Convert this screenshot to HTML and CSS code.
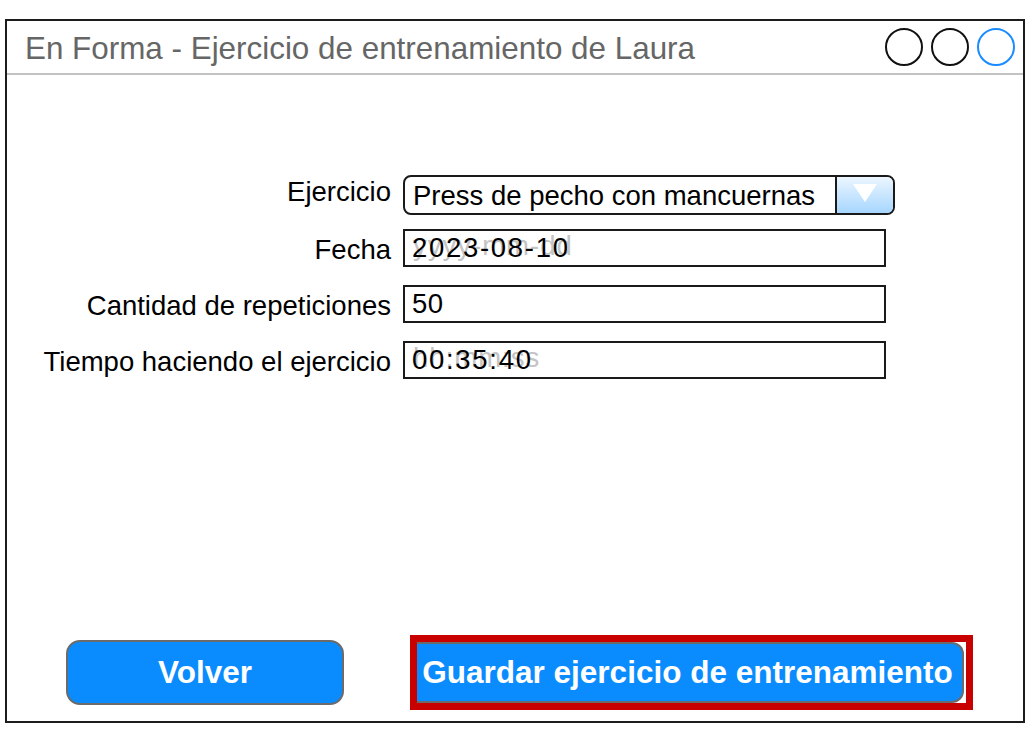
FILE: index.html
```
<!DOCTYPE html>
<html lang="es">
<head>
<meta charset="utf-8">
<title>En Forma</title>
<link rel="stylesheet" href="styles.css">
</head>
<body>
<div class="page">
  <div class="window">
    <div class="titlebar">
      <div class="title">En Forma - Ejercicio de entrenamiento de Laura</div>
      <div class="controls">
        <span class="circle"></span>
        <span class="circle"></span>
        <span class="circle blue"></span>
      </div>
    </div>
    <div class="content">
      <div class="form">
        <div class="label">Ejercicio</div>
        <div class="select">
          <span class="select-text">Press de pecho con mancuernas</span>
          <span class="select-btn">
            <svg width="24" height="18" viewBox="0 0 24 18"><polygon points="0,0 24,0 12,18" fill="#ffffff"/></svg>
          </span>
        </div>
        <div class="label">Fecha</div>
        <div class="field"><span class="ghost">yyyy-mm-dd</span><span class="value wide">2023-08-10</span></div>
        <div class="label">Cantidad de repeticiones</div>
        <div class="field"><span class="value">50</span></div>
        <div class="label">Tiempo haciendo el ejercicio</div>
        <div class="field"><span class="ghost">hh:mm:ss</span><span class="value wide">00:35:40</span></div>
      </div>
      <div class="actions">
        <div class="btn volver">Volver</div>
        <div class="highlight">
          <div class="btn guardar">Guardar ejercicio de entrenamiento</div>
        </div>
      </div>
    </div>
  </div>
</div>
</body>
</html>
```
FILE: styles.css
```
html, body {
  margin: 0;
  padding: 0;
  background: #ffffff;
}
body {
  font-family: "Liberation Sans", Arial, Helvetica, sans-serif;
  color: #000;
}
.page {
  padding: 19px 0 0 5px;
}
.window {
  width: 1020px;
  height: 704px;
  box-sizing: border-box;
  border: 2px solid #1c1c1c;
  box-shadow: 0 1px 0 #9a9a9a;
  display: flex;
  flex-direction: column;
}
.titlebar {
  height: 52px;
  border-bottom: 2px solid #c2c2c2;
  display: flex;
  align-items: center;
  justify-content: space-between;
  padding: 0 8px 0 18px;
  flex: none;
}
.title {
  font-size: 31.4px;
  color: #666666;
  white-space: nowrap;
  margin-top: 4px;
}
.controls {
  display: flex;
  gap: 8px;
}
.circle {
  width: 38px;
  height: 38px;
  box-sizing: border-box;
  border: 2px solid #111;
  border-radius: 50%;
  display: block;
}
.circle.blue {
  border-color: #1a8cff;
}
.content {
  flex: 1;
  display: flex;
  flex-direction: column;
  padding-top: 100px;
}
.form {
  display: grid;
  grid-template-columns: 384px auto;
  column-gap: 12px;
  row-gap: 18px;
  align-items: center;
  justify-items: start;
}
.label {
  justify-self: end;
  font-size: 27.5px;
  line-height: 32px;
  white-space: nowrap;
}
.form .label:nth-child(1) {
  margin-top: -2px;
}
.form .label:nth-child(n+3) {
  margin-top: 4px;
}
.select {
  width: 492px;
  height: 40px;
  box-sizing: border-box;
  border: 2px solid #1a1a1a;
  border-radius: 8px;
  display: flex;
  overflow: hidden;
  margin-bottom: -4px;
}
.select-text {
  flex: 1;
  font-size: 27.5px;
  line-height: 38px;
  padding-left: 8px;
  white-space: nowrap;
}
.select-btn {
  width: 56px;
  border-left: 2px solid #1a1a1a;
  background: linear-gradient(#ecf6ff, #a6d6ff);
  display: flex;
  align-items: center;
  justify-content: center;
}
.select-btn svg {
  display: block;
  margin-top: -4px;
}
.field {
  position: relative;
  width: 483px;
  height: 38px;
  box-sizing: border-box;
  border: 2px solid #1a1a1a;
  font-size: 27.5px;
  line-height: 34px;
  padding-left: 7px;
  white-space: nowrap;
}
.value {
  position: relative;
  letter-spacing: 0.5px;
}
.value.wide {
  letter-spacing: 1.7px;
}
.ghost {
  position: absolute;
  left: 8px;
  top: -2px;
  color: #c4c4c4;
  letter-spacing: 1px;
}
.actions {
  margin-top: auto;
  display: flex;
  align-items: center;
  padding: 0 0 11px 59px;
  gap: 66px;
}
.btn {
  box-sizing: border-box;
  background: #0a8cff;
  color: #ffffff;
  font-weight: bold;
  font-size: 31.5px;
  display: flex;
  align-items: center;
  justify-content: center;
  white-space: nowrap;
}
.volver {
  width: 278px;
  height: 65px;
  border: 2px solid #6b6b6b;
  border-radius: 14px;
  margin-top: -1px;
}
.highlight {
  width: 563px;
  height: 75px;
  box-sizing: border-box;
  border: 7px solid #c80000;
  background: #ffffff;
  padding: 0 2px 0 0;
}
.guardar {
  height: 61px;
  width: 100%;
  border: 2px solid #6b6b6b;
  border-left: none;
  border-radius: 0 12px 12px 0;
  padding-right: 4px;
}
```
